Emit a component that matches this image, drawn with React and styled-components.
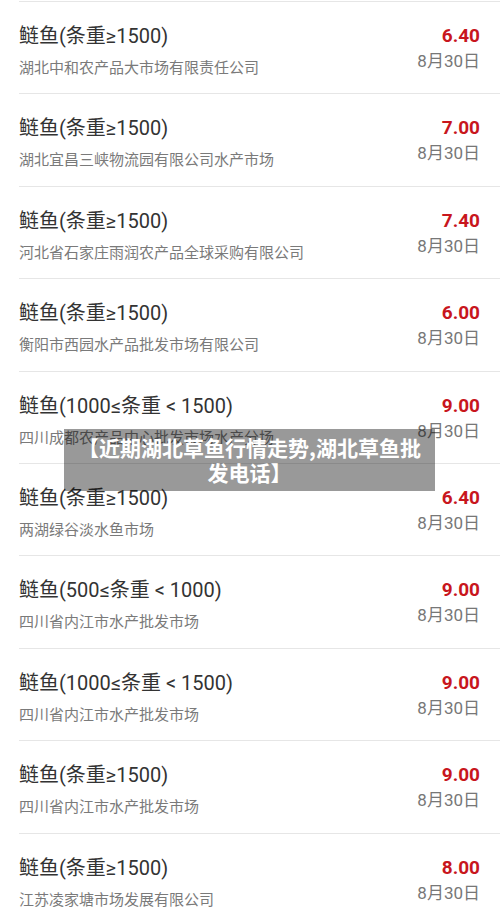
import React from "react";
import styled, { createGlobalStyle } from "styled-components";

const Global = createGlobalStyle`
  html, body { margin: 0; padding: 0; background: #fff; }
  body { font-family: Roboto, "Noto Sans CJK SC", sans-serif; }
`;

const Page = styled.div`
  position: relative;
  width: 500px;
  height: 921px;
  overflow: hidden;
  background: #fff;
  padding-top: 1px;
  box-sizing: border-box;
`;

const Row = styled.div`
  display: flex;
  justify-content: space-between;
  height: 92.4px;
  box-sizing: border-box;
  margin-left: 19px;
  border-top: 1px solid #e6e6e6;
  padding-right: 20px;
`;

const Left = styled.div`
  display: flex;
  flex-direction: column;
  padding-top: 20px;
`;

const Title = styled.div`
  font-size: 20px;
  line-height: 28px;
  color: #333;
  white-space: nowrap;
`;

const Sub = styled.div`
  margin-top: 8px;
  font-size: 15px;
  line-height: 20px;
  color: #7a7a7a;
  white-space: nowrap;
`;

const Right = styled.div`
  display: flex;
  flex-direction: column;
  align-items: flex-end;
  padding-top: 22px;
`;

const Price = styled.div`
  font-size: 19px;
  line-height: 24px;
  font-weight: 700;
  color: #c8161d;
`;

const DateText = styled.div`
  margin-top: 1px;
  font-size: 17px;
  line-height: 24px;
  color: #777;
`;

const Banner = styled.div`
  position: absolute;
  left: 64px;
  top: 429px;
  width: 371px;
  box-sizing: border-box;
  padding: 6px 10px;
  background: rgba(0, 0, 0, 0.4);
  color: #fff;
  font-family: "Noto Sans CJK SC", sans-serif;
  font-weight: 700;
  font-size: 21px;
  line-height: 25px;
  text-align: center;
`;

const items = [
  ["鲢鱼(条重≥1500)", "湖北中和农产品大市场有限责任公司", "6.40"],
  ["鲢鱼(条重≥1500)", "湖北宜昌三峡物流园有限公司水产市场", "7.00"],
  ["鲢鱼(条重≥1500)", "河北省石家庄雨润农产品全球采购有限公司", "7.40"],
  ["鲢鱼(条重≥1500)", "衡阳市西园水产品批发市场有限公司", "6.00"],
  ["鲢鱼(1000≤条重 < 1500)", "四川成都农产品中心批发市场水产分场", "9.00"],
  ["鲢鱼(条重≥1500)", "两湖绿谷淡水鱼市场", "6.40"],
  ["鲢鱼(500≤条重 < 1000)", "四川省内江市水产批发市场", "9.00"],
  ["鲢鱼(1000≤条重 < 1500)", "四川省内江市水产批发市场", "9.00"],
  ["鲢鱼(条重≥1500)", "四川省内江市水产批发市场", "9.00"],
  ["鲢鱼(条重≥1500)", "江苏凌家塘市场发展有限公司", "8.00"],
];

export default function App() {
  return (
    <Page>
      <Global />
      {items.map(([t, s, p], i) => (
        <Row key={i}>
          <Left>
            <Title>{t}</Title>
            <Sub>{s}</Sub>
          </Left>
          <Right>
            <Price>{p}</Price>
            <DateText>8月30日</DateText>
          </Right>
        </Row>
      ))}
      <Banner>【近期湖北草鱼行情走势,湖北草鱼批发电话】</Banner>
    </Page>
  );
}
